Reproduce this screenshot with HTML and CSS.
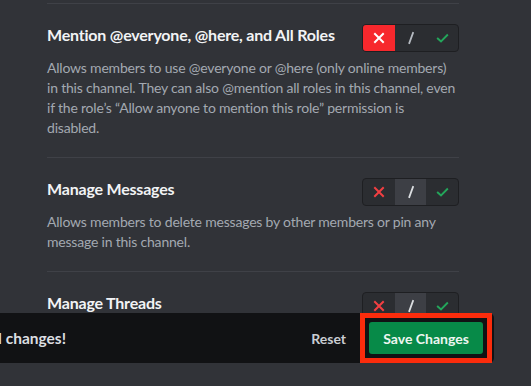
FILE: index.html
```html
<!DOCTYPE html>
<html lang="en">
    <head>
        <meta charset="UTF-8">
        <title>Channel permissions</title>
        <link rel="stylesheet" href="styles.css">
    </head>
    <body>
        <div class="permissions">
            <div class="perm-row">
                <div class="perm-head">
                    <h3>Mention @everyone, @here, and All Roles</h3>
                    <div class="tri-toggle">
                        <span class="seg deny active-deny">
                            <svg viewBox="0 0 16 16"><path d="M4 4 L12 12 M12 4 L4 12"/></svg>
                        </span>
                        <span class="seg pass">
                            <svg viewBox="0 0 16 16"><path d="M10 3 L6.3 13"/></svg>
                        </span>
                        <span class="seg allow">
                            <svg viewBox="0 0 16 16"><path d="M3 8.6 L6.4 11.6 L13 5"/></svg>
                        </span>
                    </div>
                </div>
                <p>Allows members to use @everyone or @here (only online members) in this channel. They can also @mention all roles in this channel, even if the role’s “Allow anyone to mention this role” permission is disabled.</p>
            </div>

            <div class="perm-row">
                <div class="perm-head">
                    <h3>Manage Messages</h3>
                    <div class="tri-toggle">
                        <span class="seg deny">
                            <svg viewBox="0 0 16 16"><path d="M4 4 L12 12 M12 4 L4 12"/></svg>
                        </span>
                        <span class="seg pass active-pass">
                            <svg viewBox="0 0 16 16"><path d="M10 3 L6.3 13"/></svg>
                        </span>
                        <span class="seg allow">
                            <svg viewBox="0 0 16 16"><path d="M3 8.6 L6.4 11.6 L13 5"/></svg>
                        </span>
                    </div>
                </div>
                <p>Allows members to delete messages by other members or pin any message in this channel.</p>
            </div>

            <div class="perm-row">
                <div class="perm-head">
                    <h3>Manage Threads</h3>
                    <div class="tri-toggle">
                        <span class="seg deny">
                            <svg viewBox="0 0 16 16"><path d="M4 4 L12 12 M12 4 L4 12"/></svg>
                        </span>
                        <span class="seg pass active-pass">
                            <svg viewBox="0 0 16 16"><path d="M10 3 L6.3 13"/></svg>
                        </span>
                        <span class="seg allow">
                            <svg viewBox="0 0 16 16"><path d="M3 8.6 L6.4 11.6 L13 5"/></svg>
                        </span>
                    </div>
                </div>
                <p>Allows members to rename, delete and close/open threads, as well as turning on slow mode in threads.</p>
            </div>
        </div>

        <div class="save-bar">
            <div class="notice"><span>Careful — you have unsaved changes!</span></div>
            <button class="reset">Reset</button>
            <div class="highlight">
                <button class="save">Save Changes</button>
            </div>
        </div>
    </body>
</html>
```

FILE: styles.css
```css
body {
    margin: 0;
    background-color: #313338;
    font-family: Lato, "Noto Sans", sans-serif;
    overflow: hidden;
}
.permissions {
    width: 412px;
    margin-left: 47px;
    padding-top: 3px;
}
.perm-row {
    border-top: 1px solid #3f4147;
    padding: 20px 0 19px;
}
.perm-head {
    display: flex;
    justify-content: space-between;
    align-items: flex-start;
}
.perm-head h3 {
    margin: 1px 0 0;
    font-size: 16px;
    line-height: 20px;
    font-weight: 700;
    letter-spacing: -0.2px;
    color: #f2f3f5;
}
.perm-row p {
    margin: 6px 2px 0 0;
    font-size: 14px;
    line-height: 20px;
    letter-spacing: -0.2px;
    color: #a3a9b1;
}
.tri-toggle {
    display: flex;
    width: 95px;
    height: 26px;
    border: 1px solid #1e1f22;
    border-radius: 4px;
    background-color: #2b2d31;
    overflow: hidden;
    flex-shrink: 0;
}
.seg {
    flex: 1;
    display: flex;
    align-items: center;
    justify-content: center;
}
.seg svg {
    width: 16px;
    height: 16px;
    fill: none;
    stroke-width: 2;
    stroke-linecap: square;
}
.deny svg {
    stroke: #f23f42;
}
.pass svg {
    stroke: #b5bac1;
    stroke-width: 1.8;
}
.allow svg {
    stroke: #23a55a;
    width: 15px;
}
.active-deny {
    background-color: #f7282d;
}
.active-deny svg {
    stroke: #ffffff;
}
.active-pass {
    background-color: #3d3f45;
}
.active-pass svg {
    stroke: #dbdee1;
}
.save-bar {
    position: absolute;
    left: 0;
    top: 313px;
    width: 494px;
    height: 50px;
    display: flex;
    align-items: center;
    background-color: #111214;
    border-radius: 0 5px 5px 0;
}
.notice {
    width: 66px;
    display: flex;
    justify-content: flex-end;
    overflow: hidden;
    margin-right: auto;
}
.notice span {
    flex-shrink: 0;
    white-space: nowrap;
    font-size: 15.5px;
    font-weight: 700;
    color: #dbdee1;
}
.reset {
    background: none;
    border: none;
    padding: 0;
    margin-right: 14px;
    font-family: inherit;
    font-size: 14px;
    font-weight: 700;
    color: #c9cdd2;
}
.highlight {
    border: 5px solid #fb2c0c;
    padding: 4px;
    margin-right: 2px;
}
.save {
    display: block;
    width: 114px;
    height: 32px;
    border: none;
    border-radius: 3px;
    background-color: #078a48;
    color: #eef6f1;
    font-family: inherit;
    font-size: 14px;
    font-weight: 700;
}
```
